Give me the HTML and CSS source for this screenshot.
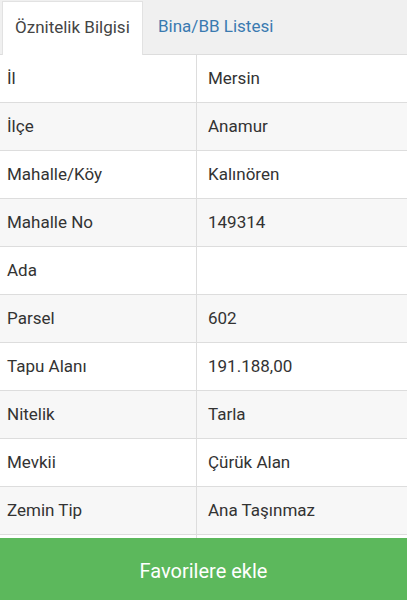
FILE: index.html
```html
<!DOCTYPE html>
<html lang="tr">
<head>
<meta charset="utf-8">
<link rel="stylesheet" href="styles.css">
</head>
<body>
<div class="tabs">
  <div class="tab active">Öznitelik Bilgisi</div>
  <div class="tab link">Bina/BB Listesi</div>
</div>
<div class="attr">
  <div class="row"><div class="k">İl</div><div class="v">Mersin</div></div>
  <div class="row"><div class="k">İlçe</div><div class="v">Anamur</div></div>
  <div class="row"><div class="k">Mahalle/Köy</div><div class="v">Kalınören</div></div>
  <div class="row"><div class="k">Mahalle No</div><div class="v">149314</div></div>
  <div class="row"><div class="k">Ada</div><div class="v"></div></div>
  <div class="row"><div class="k">Parsel</div><div class="v">602</div></div>
  <div class="row"><div class="k">Tapu Alanı</div><div class="v">191.188,00</div></div>
  <div class="row"><div class="k">Nitelik</div><div class="v">Tarla</div></div>
  <div class="row"><div class="k">Mevkii</div><div class="v">Çürük Alan</div></div>
  <div class="row"><div class="k">Zemin Tip</div><div class="v">Ana Taşınmaz</div></div>
  <div class="row"><div class="k"></div><div class="v"></div></div>
</div>
<button class="fav">Favorilere ekle</button>
</body>
</html>
```
FILE: styles.css
```css
html, body {
  margin: 0;
  padding: 0;
  background: #fff;
  font-family: Roboto, "Noto Sans", sans-serif;
  color: #333;
  overflow: hidden;
  height: 600px;
}
.tabs {
  display: flex;
  background: #f0f0f0;
  height: 55px;
  box-sizing: border-box;
  padding: 1px 0 0 2px;
  border-bottom: 1px solid #ddd;
}
.tab {
  font-size: 17px;
  padding: 0 12px 3px;
  display: flex;
  align-items: center;
  box-sizing: border-box;
  height: 53px;
}
.tab.active {
  background: #fff;
  border: 1px solid #e2e2e2;
  border-bottom: none;
  height: 54px;
  margin-bottom: -1px;
  width: 141px;
  color: #444;
}
.tab.link {
  color: #3a7ab0;
  padding-left: 15px;
}
.row {
  display: grid;
  grid-template-columns: 197px 1fr;
  height: 48px;
  box-sizing: border-box;
  border-bottom: 1px solid #ddd;
  font-size: 17px;
}
.row:nth-child(even) {
  background: #f7f7f7;
}
.k, .v {
  display: flex;
  align-items: center;
  padding-bottom: 2px;
}
.k {
  padding-left: 7px;
  border-right: 1px solid #ddd;
}
.v {
  padding-left: 11px;
}
.fav {
  position: fixed;
  left: 0;
  bottom: 0;
  width: 100%;
  height: 62px;
  padding: 4px 0 0;
  border: none;
  background: #5cb85c;
  color: #fff;
  font-family: Roboto, "Noto Sans", sans-serif;
  font-size: 20px;
}
```
